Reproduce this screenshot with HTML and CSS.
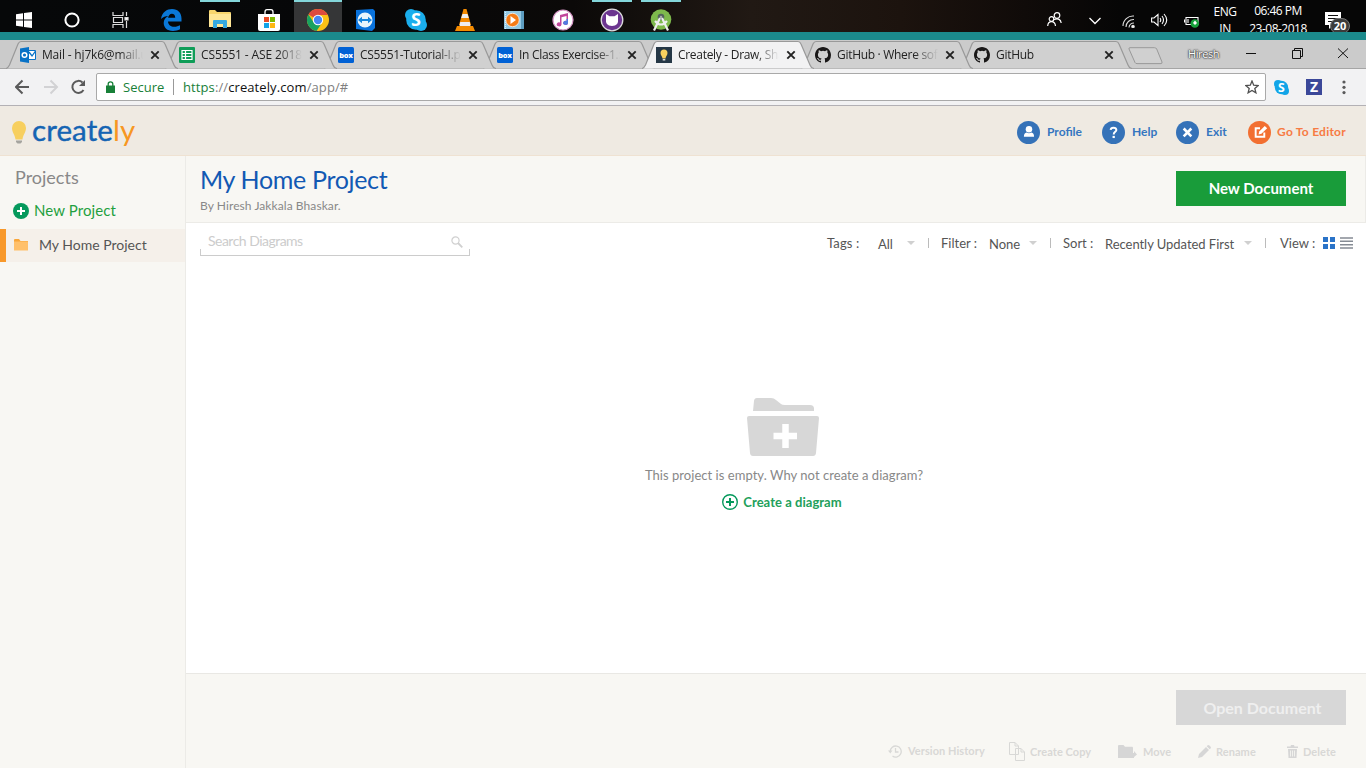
FILE: index.html
```html
<!DOCTYPE html>
<html lang="en">
<head>
<meta charset="utf-8">
<title>Creately - Draw, Share</title>
<link rel="stylesheet" href="styles.css">
</head>
<body>
<svg class="defs" width="0" height="0">
  <symbol id="tab" viewBox="0 0 172 29"><path d="M0 28.5C2 28 2.500 27 3.500 25L12 4Q13.200 1.500 15 1.500H156Q158 1.500 159 4L168 25Q169 28 172 28.500" stroke="#999" stroke-width="1.200"/></symbol>
  <symbol id="x" viewBox="0 0 10 10"><path d="M1.300 1.300L8.700 8.700M8.700 1.300L1.300 8.700" stroke="#222" stroke-width="1.900"/></symbol>
  <symbol id="github" viewBox="0 0 16 16"><path fill="#191717" d="M8 0C3.580 0 0 3.580 0 8c0 3.540 2.290 6.530 5.470 7.590.4.070.55-.17.55-.38 0-.19-.01-.82-.01-1.490-2.010.37-2.530-.49-2.690-.94-.09-.23-.48-.94-.82-1.130-.28-.15-.68-.52-.01-.53.63-.01 1.080.58 1.230.82.72 1.210 1.870.87 2.330.66.07-.52.28-.87.51-1.070-1.780-.2-3.640-.89-3.640-3.950 0-.87.31-1.590.82-2.150-.08-.2-.36-1.020.08-2.120 0 0 .67-.21 2.200.82a7.600 7.600 0 0 1 4 0c1.530-1.040 2.200-.82 2.200-.82.44 1.100.16 1.920.08 2.120.51.56.82 1.270.82 2.150 0 3.070-1.870 3.750-3.650 3.950.29.25.54.73.54 1.480 0 1.070-.01 1.930-.01 2.200 0 .21.15.46.55.38A8 8 0 0 0 16 8c0-4.420-3.580-8-8-8z"/></symbol>
</svg>

<div class="taskbar">
  <div class="apps">
    <div class="tile"><svg width="16" height="16" viewBox="0 0 16 16" fill="#fff"><path d="M0 2.300L7 1.300V7.500H0zM8 1.100L16 0V7.500H8zM0 8.500H7V14.700L0 13.700zM8 8.500H16V16L8 14.900z"/></svg></div>
    <div class="tile"><svg width="16" height="16" viewBox="0 0 16 16"><circle cx="8" cy="8" r="6.600" fill="none" stroke="#fff" stroke-width="2"/></svg></div>
    <div class="tile view"><svg width="17" height="16" viewBox="0 0 17 16" fill="none" stroke="#ddd" stroke-width="1.200"><path d="M1 0V3.500H11V0M1 16V12.500H11V16M1.500 5.500H10.500V10.500H1.500zM14.500 0V4M14.500 9V16"/><path d="M13 5.500H16V8H13z" fill="#fff"/></svg></div>
    <div class="tile"><svg width="21" height="22" viewBox="0 0 21 22"><path fill="#0a78d7" d="M0 10C1 3 6 0 11 0C17 0 20.500 4 20.500 9.500V12.500H7C7.200 16 10 17.800 13 17.800C15.500 17.800 17.500 17.200 19 16.300V20.300C17 21.500 14.500 22 12 22C6 22 2.700 18.400 2.700 14C2.700 10.800 4.500 8.500 7.300 7C4.500 7.200 2 8 0 10zM7.100 8.800H14.200C14.200 6.200 13 4.800 10.900 4.800C8.900 4.800 7.500 6.500 7.100 8.800z"/></svg></div>
    <div class="tile open"><svg width="22" height="20" viewBox="0 0 22 20"><path fill="#f8d66d" d="M0 1Q0 0 1 0H6L8 2H21Q22 2 22 3V17H0z"/><path fill="#ffe796" d="M0 4H22V17H0z"/><path fill="#35a9df" d="M4 18V11Q4 10 5 10H17Q18 10 18 11V18H14V14H8V18z"/></svg></div>
    <div class="tile"><svg width="24" height="22" viewBox="0 0 24 22"><path d="M8 5V3Q8 .7 10 .7H14Q16 .7 16 3V5" fill="none" stroke="#fff" stroke-width="1.300"/><path fill="#fff" d="M1 5H23V20Q23 22 21 22H3Q1 22 1 20z"/><path fill="#e94b26" d="M7 8h5v5H7z"/><path fill="#7eb900" d="M13 8h5v5h-5z"/><path fill="#13a3e8" d="M7 14h5v5H7z"/><path fill="#fdb813" d="M13 14h5v5h-5z"/></svg></div>
    <div class="tile open active"><svg width="22" height="22" viewBox="0 0 22 22"><circle cx="11" cy="11" r="11" fill="#fbc116"/><path fill="#dd4b3e" d="M11 11L1.400 5.600A11 11 0 0 1 20.800 6H11z"/><path fill="#18a260" d="M1.400 5.600A11 11 0 0 0 9.500 21.900L14.500 14.500L6.500 13z"/><circle cx="11" cy="11" r="5.200" fill="#fff"/><circle cx="11" cy="11" r="4.200" fill="#4587f3"/></svg></div>
    <div class="tile tv"><svg width="20" height="22" viewBox="0 0 20 22"><path fill="#0972dc" d="M1 1L18 0L20 2V19L17 22L1 20z"/><circle cx="10" cy="11" r="7.500" fill="#e8f4fc"/><path fill="#1685dd" d="M3 11L7 7.800V10H13V7.800L17 11L13 14.200V12H7V14.200z"/></svg></div>
    <div class="tile"><svg width="22" height="22" viewBox="0 0 22 22"><circle cx="11" cy="11" r="9.800" fill="#1aaeed"/><circle cx="6" cy="6" r="6" fill="#1aaeed"/><circle cx="16" cy="16" r="6" fill="#1aaeed"/><text x="11" y="17" text-anchor="middle" class="skype">S</text></svg></div>
    <div class="tile"><svg width="20" height="22" viewBox="0 0 20 22"><path fill="#f48b00" d="M8.500 0H11.500L16 16H4zM2 17H18L20 22H0z"/><path fill="#eee" d="M7.500 5H12.500L13.800 9H6.200zM5.200 13H14.800L15.500 17H4.500z"/></svg></div>
    <div class="tile"><svg width="20" height="20" viewBox="0 0 20 20"><path fill="#5d9dc0" d="M5 1H20V19H5z"/><path fill="#94c9e3" d="M0 1H17V19H0z"/><path d="M1.500 2V19" stroke="#def" stroke-dasharray="1 1"/><circle cx="8.500" cy="10" r="6.700" fill="#f47b16" stroke="#fff" stroke-width=".7"/><path fill="#fff" d="M6.500 6L12 10L6.500 14z"/></svg></div>
    <div class="tile"><svg width="22" height="22" viewBox="0 0 22 22"><circle cx="11" cy="11" r="10" fill="#fff" stroke="#d796c7" stroke-width="1.200"/><path fill="#c2459c" d="M8 6L16 4V14A2.400 2 0 1 1 14.500 12V7L9.500 8.300V15.500A2.400 2 0 1 1 8 13.500z"/><path fill="#517ce0" d="M14.500 10H16V14A2.400 2 0 1 1 14.500 12z"/></svg></div>
    <div class="tile open"><svg width="24" height="24" viewBox="0 0 24 24"><circle cx="12" cy="12" r="10.800" fill="#6c3590" stroke="#ddd" stroke-width="1.300"/><path fill="#fff" d="M6 6L9.500 8.200H14.500L18 6V11Q19 18 12 18Q5 18 6 11z"/></svg></div>
    <div class="tile open"><svg width="22" height="22" viewBox="0 0 22 22"><circle cx="11" cy="10.500" r="10.300" fill="#7eb94c"/><circle cx="11" cy="8" r="3.300" fill="#52635b"/><circle cx="11" cy="8" r="1.200" fill="#aaa"/><path d="M10 9L4 21.500M12 9L18 21.500M5 12Q11 19 17 12" fill="none" stroke="#eee" stroke-width="2.200"/></svg></div>
  </div>
  <div class="tray">
    <svg class="people" width="15" height="15" viewBox="0 0 15 15" fill="none" stroke="#fff" stroke-width="1.200"><circle cx="10" cy="3.500" r="2.800"/><circle cx="4.500" cy="7" r="2.300"/><path d="M.7 14Q1 9.700 4.500 9.700T8.500 14M7 7.500Q13.500 5.500 14.200 11"/></svg>
    <svg class="chev" width="12" height="8" viewBox="0 0 12 8"><path d="M.5 1L6 6.500L11.500 1" fill="none" stroke="#fff" stroke-width="1.300"/></svg>
    <svg class="wifi" width="14" height="13" viewBox="0 0 14 13" fill="none" stroke="#ddd" stroke-width="1.100"><path d="M1 11A10 10 0 0 1 12 1M4 12A7.500 7.500 0 0 1 12 4.500M7 12.500A5 5 0 0 1 12 8"/><circle cx="11" cy="11.500" r="1.200" fill="#fff"/></svg>
    <svg class="vol" width="17" height="14" viewBox="0 0 17 14" fill="none" stroke="#fff" stroke-width="1.100"><path d="M.6 5H3L7 1.500V12.500L3 9H.6zM9 5Q10.500 7 9 9M11 3Q14 7 11 11M13 1Q18.500 7 13 13"/></svg>
    <svg class="bat" width="16" height="12" viewBox="0 0 16 12"><path d="M2 1.500H14V8.500H2zM.5 3.500V6.500M4 3V7" fill="none" stroke="#fff" stroke-width="1.100"/><circle cx="10.800" cy="7.500" r="4.300" fill="#16a13a"/><path d="M11 4.500L13 7L11 9L9 7zM11 8V11" fill="#fff"/></svg>
    <div class="lang">ENG<br>IN</div>
    <div class="clock"><span>06:46 PM</span><br>23-08-2018</div>
    <div class="notes"><svg width="16" height="17" viewBox="0 0 16 17"><path fill="#fff" d="M0 0H16V13H8L4 17V13H0z"/><path d="M3 3.500H13M3 6.500H13M3 9.500H9" stroke="#111"/></svg><b class="count">20</b></div>
  </div>
</div>
<div class="strip"></div>

<div class="tabs">
  <div class="tab"><svg class="shape"><use href="#tab"/></svg><svg class="fav" viewBox="0 0 16 16"><path fill="#0872c6" d="M0 1.500L9 0V16L0 14.500z"/><circle cx="4.500" cy="8" r="2.300" fill="none" stroke="#fff" stroke-width="1.500"/><path d="M9 3.500H15.500V12.500H9" fill="#fff" stroke="#0872c6"/><path d="M9 5L12 9L15.500 4" fill="none" stroke="#0872c6" stroke-width="1.300"/></svg><span class="name t1">Mail - hj7k6@mail.u</span><svg class="close"><use href="#x"/></svg></div>
  <div class="tab"><svg class="shape"><use href="#tab"/></svg><svg class="fav" viewBox="0 0 16 16"><rect width="16" height="16" rx="1" fill="#0f9d58"/><path d="M3 3.500H13V12.500H3zM3 6.500H13M3 9.500H13M6.500 3.500V12.500" fill="none" stroke="#fff" stroke-width="1.200"/></svg><span class="name t2">CS5551 - ASE 2018</span><svg class="close"><use href="#x"/></svg></div>
  <div class="tab"><svg class="shape"><use href="#tab"/></svg><svg class="fav" viewBox="0 0 16 16"><rect width="16" height="16" rx="1.500" fill="#0061d5"/><text x="8" y="11" text-anchor="middle" class="box">box</text></svg><span class="name t3">CS5551-Tutorial-I.p</span><svg class="close"><use href="#x"/></svg></div>
  <div class="tab"><svg class="shape"><use href="#tab"/></svg><svg class="fav" viewBox="0 0 16 16"><rect width="16" height="16" rx="1.500" fill="#0061d5"/><text x="8" y="11" text-anchor="middle" class="box">box</text></svg><span class="name t4">In Class Exercise-1.:</span><svg class="close"><use href="#x"/></svg></div>
  <div class="tab current"><svg class="shape"><use href="#tab"/></svg><svg class="fav" viewBox="0 0 16 16"><path fill="#253746" d="M0 0H16V16H0z"/><path fill="#f7cf5e" d="M8 2.500A3.600 3.600 0 0 1 11.500 6C11.500 8 9.800 9.300 9.500 11.500H6.500C6.200 9.300 4.500 8 4.500 6A3.600 3.600 0 0 1 8 2.500z"/><path fill="#ddd" d="M6.700 12H9.300V13.500H6.700z"/></svg><span class="name t5">Creately - Draw, Sha</span><svg class="close"><use href="#x"/></svg></div>
  <div class="tab"><svg class="shape"><use href="#tab"/></svg><svg class="fav"><use href="#github"/></svg><span class="name t6">GitHub · Where soft</span><svg class="close"><use href="#x"/></svg></div>
  <div class="tab"><svg class="shape"><use href="#tab"/></svg><svg class="fav"><use href="#github"/></svg><span class="name t7">GitHub</span><svg class="close"><use href="#x"/></svg></div>
  <svg class="newtab" width="35" height="18" viewBox="0 0 35 18"><path d="M2 .7H26.500Q28 .7 28.700 2L34 15Q34.300 16.600 33 16.600H9Q7.500 16.600 7 15.500L1 2Q.6 .7 2 .7z" fill="#d0d0d0" stroke="#999"/></svg>
  <span class="user">Hiresh</span>
  <svg class="winbtns" width="102" height="12" viewBox="0 0 102 12" fill="none" stroke="#111"><path d="M0 6.500H10M46.500 3.500H54.500V11.500H46.500zM48.500 3V1.500H56.500V9.500H55M92 1.500L102 11M102 1.500L92 11"/></svg>
</div>

<div class="toolbar">
  <svg width="72" height="16" viewBox="0 0 72 16" fill="none" stroke-width="2"><path stroke="#5a5a5a" d="M14 8H1.500M7.500 1.500L1 8L7.500 14.500"/><path stroke="#d2d2d4" d="M29 8H41.500M35.500 1.500L42 8L35.500 14.500"/><path stroke="#5a5a5a" d="M68.500 11A6 6 0 1 1 67.500 3.500"/><path fill="#5a5a5a" d="M70 1V7H64z"/></svg>
  <div class="url">
    <svg width="9" height="12" viewBox="0 0 9 12"><path fill="#188038" d="M0 4.500H9V12H0z"/><path d="M2.200 5V3Q2.200.8 4.500.8T6.800 3V5" fill="none" stroke="#188038" stroke-width="1.300"/></svg>
    <span class="secure">Secure</span><i></i>
    <span class="addr"><b>https</b>://<em>creately.com</em>/app/#</span>
    <svg class="star" width="14" height="14" viewBox="0 0 14 14"><path d="M7 1L8.700 5.200L13.200 5.500L9.800 8.400L10.900 12.800L7 10.400L3.100 12.800L4.200 8.400L.8 5.500L5.300 5.200z" fill="none" stroke="#505050" stroke-width="1.300"/></svg>
  </div>
  <svg class="sk" width="15" height="15" viewBox="0 0 22 22"><circle cx="11" cy="11" r="9.800" fill="#12a5e8"/><circle cx="6" cy="6" r="6" fill="#12a5e8"/><circle cx="16" cy="16" r="6" fill="#12a5e8"/><text x="11" y="17.500" text-anchor="middle" class="skype">S</text></svg>
  <b class="zed">Z</b>
  <svg class="dots" width="4" height="15" viewBox="0 0 4 15" fill="#5a5a5a"><circle cx="2" cy="2" r="1.600"/><circle cx="2" cy="7.300" r="1.600"/><circle cx="2" cy="12.600" r="1.600"/></svg>
</div>

<header class="appbar">
  <svg class="bulb" width="14" height="23" viewBox="0 0 14 23"><path fill="#f7cf5e" d="M7 0A7 7 0 0 1 14 7C14 11.500 10.800 14 10.500 18.500H3.500C3.200 14 0 11.500 0 7A7 7 0 0 1 7 0z"/><path fill="#a5a49f" d="M4 19.500H10V21L8.500 22.500H5.500L4 21z"/></svg>
  <div class="logo">create<span>ly</span></div>
  <nav>
    <a class="profile"><svg viewBox="0 0 24 24"><circle cx="12" cy="12" r="12" fill="#3572b8"/><circle cx="12.500" cy="8.500" r="3.400" fill="#fff"/><path fill="#fff" d="M7.200 16.500Q7.200 12.500 10 12Q12.500 13.500 15 12Q17.800 12.500 17.800 16.500z"/></svg><span>Profile</span></a>
    <a class="help"><svg viewBox="0 0 24 24"><circle cx="12" cy="12" r="12" fill="#3572b8"/><path d="M9 9.200Q9.200 7 12 7T15 9.300C15 11.300 12.200 11.200 12.200 14" fill="none" stroke="#fff" stroke-width="2"/><path fill="#fff" d="M11 15.500H13.400V17.800H11z"/></svg><span>Help</span></a>
    <a class="exit"><svg viewBox="0 0 24 24"><circle cx="12" cy="12" r="12" fill="#3572b8"/><path d="M8 7.800L16 16M16 7.800L8 16" stroke="#fff" stroke-width="2.700"/></svg><span>Exit</span></a>
    <a class="editor"><svg viewBox="0 0 24 24"><circle cx="12" cy="12" r="12" fill="#f26f31"/><path d="M12.500 7.500H8V16.500H17V12" fill="none" stroke="#fff" stroke-width="2"/><path fill="#fff" d="M11 14L11.700 11L17.500 5.300L20 7.600L14 13.400z"/></svg><span>Go To Editor</span></a>
  </nav>
</header>

<div class="app">
  <aside>
    <h2>Projects</h2>
    <div class="newproj"><svg width="16" height="16" viewBox="0 0 16 16"><circle cx="8" cy="8" r="8" fill="#05995c"/><path d="M8 4V12M4 8H12" stroke="#fff" stroke-width="2"/></svg><span>New Project</span></div>
    <div class="proj"><svg width="14" height="12" viewBox="0 0 14 12"><path fill="#f9a63a" d="M0 1Q0 0 1 0H5L6.500 2H14V5H0z"/><path fill="#ffc06b" d="M0 2.500H14V11.500H0z"/></svg><span>My Home Project</span></div>
  </aside>
  <main>
    <section class="head"><div><h1>My Home Project</h1><p>By Hiresh Jakkala Bhaskar.</p></div><button class="newdoc"><span>New Document</span></button></section>
    <section class="content">
      <div class="search"><span>Search Diagrams</span><svg width="12" height="12" viewBox="0 0 12 12" fill="none" stroke="#d0d0d0"><circle cx="4.500" cy="4.500" r="3.600" stroke-width="1.200"/><path d="M7 7L11.300 11.300" stroke-width="1.800"/></svg></div>
      <div class="filters">
        <span class="f1">Tags :</span><span class="v f2">All</span><i class="arr"></i><i class="sep"></i>
        <span class="f3">Filter :</span><span class="v f4">None</span><i class="arr"></i><i class="sep"></i>
        <span class="f5">Sort :</span><span class="v f6">Recently Updated First</span><i class="arr"></i><i class="sep"></i>
        <span class="f7">View :</span>
        <svg width="12" height="12" viewBox="0 0 12 12" fill="#2a73c8"><path d="M0 0H5V5H0zM7 0H12V5H7zM0 7H5V12H0zM7 7H12V12H7z"/></svg>
        <svg width="13" height="12" viewBox="0 0 13 12"><path d="M0 1H13M0 4.300H13M0 7.700H13M0 11H13" stroke="#858b94" stroke-width="1.600"/></svg>
      </div>
      <div class="empty">
        <svg width="72" height="58" viewBox="0 0 72 58" fill="#d7d7d7"><path d="M6 13L7 3Q7.300 0 10 0H24Q27 0 29 2L34 6Q35 7 38 7H63Q66.500 7 67 10V13zM2 18H70Q72 18 72 20L69 55Q68.700 58 66 58H6Q3.300 58 3 55L0 20Q0 18 2 18z"/><path d="M38.500 26V50M26.500 38H50" stroke="#fff" stroke-width="6.500"/></svg>
        <p>This project is empty. Why not create a diagram?</p>
        <div class="create"><svg width="16" height="16" viewBox="0 0 16 16" fill="none" stroke="#05995c"><circle cx="8" cy="8" r="7.300" stroke-width="1.400"/><path d="M8 4V12M4 8H12" stroke-width="2"/></svg><b>Create a diagram</b></div>
      </div>
    </section>
    <footer>
      <button class="opendoc"><span>Open Document</span></button>
      <div class="actions">
        <div class="a1"><svg width="14" height="13" viewBox="0 0 14 13" fill="none" stroke="#d8d8d6" stroke-width="1.300"><path d="M2.200 6.500A5.500 5.500 0 1 1 4.500 11M7.500 3V7H10.500"/><path fill="#d8d8d6" stroke="none" d="M0 5.500H4.500L2.300 8.500z"/></svg><span>Version History</span></div>
        <div class="a2"><svg width="16" height="19" viewBox="0 0 16 19" fill="#f8f7f3" stroke="#d8d8d6"><path d="M.5.500H6L9.500 4V12.500H.5zM6 .5V4H9.500M6.500 6.500H12L15.500 10V18.500H6.500zM12 6.500V10H15.500"/></svg><span>Create Copy</span></div>
        <div class="a3"><svg width="19" height="13" viewBox="0 0 19 13" fill="#d6d6d6"><path d="M0 1Q0 0 1 0H5.500L7 1.700H14Q15 1.700 15 3V8H16V6L19 9.500L16 12V13H0z"/></svg><span>Move</span></div>
        <div class="a4"><svg width="13" height="13" viewBox="0 0 13 13" fill="#d6d6d6"><path d="M0 13L1 9L8 2L11 5L4 12zM8.700 1.300L10 0Q11 0 12 1T13 3L11.700 4.300z"/></svg><span>Rename</span></div>
        <div class="a5"><svg width="11" height="13" viewBox="0 0 11 13"><path fill="#d6d6d6" d="M0 1.500H3.500L4 0H7L7.500 1.500H11V3H0zM1 4H10L9.500 13H1.500z"/><path d="M3.500 5.500V11.500M5.500 5.500V11.500M7.500 5.500V11.500" stroke="#f8f7f3" stroke-width=".8"/></svg><span>Delete</span></div>
      </div>
    </footer>
  </main>
</div>
</body>
</html>
```
FILE: styles.css
```css
* { box-sizing: border-box; }
html, body { height: 768px; overflow: hidden; }
body { margin: 0; font-family: Lato, sans-serif; background: #fff; color: #555; white-space: nowrap; }
h1, h2, p { margin: 0; font-weight: 400; }
svg { display: block; flex: none; }
span, b { flex: none; }
.defs { position: absolute; }

.taskbar { height: 32px; display: flex; justify-content: space-between; overflow: hidden; color: #fff; background: linear-gradient(90deg, #060809 0, #060708 25%, #0b0908 42%, #211914 55%, #1c130e 66%, #100b09 75%, #060606 82%, #060606 100%); }
.apps { display: flex; gap: 1px; }
.tile { width: 48px; height: 32px; display: flex; justify-content: center; align-items: center; padding-top: 7px; }
.tile:nth-child(-n+3) { margin-right: -1px; }
.tile:nth-child(3) { margin-right: 2px; }
.tile.tv { padding-right: 4px; }
.tile.open { background: linear-gradient(#83d6da, #83d6da) center top / 40px 2px no-repeat; }
.tile.active { background: linear-gradient(#83d6da, #83d6da) center top / 48px 2px no-repeat, #353637; }
.skype { font: 700 18px "Open Sans", sans-serif; fill: #fff; }
.tray { display: flex; width: 319px; font: 12px/17px "Open Sans", sans-serif; letter-spacing: -.5px; text-align: center; }
.people { margin-top: 12px; }
.chev { margin: 17px 0 0 27px; }
.wifi { margin: 15px 0 0 21px; }
.vol { margin: 13px 0 0 15px; }
.bat { margin: 16px 0 0 16px; }
.lang { width: 24px; margin: 3px 0 0 13px; }
.clock { width: 60px; margin: 2px 0 0 11px; line-height: 18px; }
.notes { position: relative; margin: 12px 0 0 17px; }
.count { position: absolute; left: 5px; top: 6px; width: 20px; height: 16px; border-radius: 8px; background: #3b3b3b; border: 1px solid #777; font-size: 11px; line-height: 14px; letter-spacing: 0; }
.strip { height: 8px; background: #1b8a8c; }

.tabs { height: 29px; display: flex; padding-left: 6px; background: #cbcbcb; border-bottom: 1px solid #a5a5a5; font: 12px/16px "Open Sans", sans-serif; }
.tab { position: relative; width: 159px; height: 29px; display: flex; align-items: flex-start; padding: 7px 0 0 14px; color: #222; z-index: 1; }
.tab:nth-child(1) { z-index: 7; } .tab:nth-child(2) { z-index: 6; } .tab:nth-child(3) { z-index: 5; } .tab:nth-child(4) { z-index: 4; }
.tab:nth-child(6) { z-index: 3; } .tab:nth-child(7) { z-index: 2; }
.tab.current { z-index: 9; }
.shape { position: absolute; left: 0; top: 0; width: 172px; height: 29px; fill: #d0d0d0; }
.current .shape { fill: #f2f2f3; }
.fav { position: relative; width: 16px; height: 16px; }
.box { font: 800 7.500px "Open Sans", sans-serif; fill: #fff; letter-spacing: -.3px; }
.name { position: relative; width: 101px; margin-left: 6px; overflow: hidden; -webkit-mask-image: linear-gradient(90deg, #000 76%, transparent); mask-image: linear-gradient(90deg, #000 76%, transparent); letter-spacing: -.3px; }
.t1 { letter-spacing: -.18px; } .t2 { letter-spacing: -.12px; }
.close { position: relative; width: 10px; height: 10px; margin: 3px 0 0 7px; }
.newtab { margin: 7px 0 0 9px; }
.user { margin: 6px 0 0 25px; width: 32px; color: #fff; font-size: 11px; letter-spacing: -.4px; text-shadow: 0 0 2px #333, 0 0 2px #333, 0 0 1px #333; }
.winbtns { margin: 7px 0 0 26px; }

.toolbar { height: 37px; display: flex; align-items: center; padding-left: 15px; background: #f2f2f3; border-bottom: 1px solid #b3b1b5; }
.url { display: flex; align-items: center; width: 1170px; height: 28px; margin-left: 9px; padding-left: 9px; background: #fff; border: 1px solid #a9a9a9; border-radius: 2px; }
.url { font: 14px/20px "Open Sans", sans-serif; }
.secure { width: 41px; margin-left: 8px; color: #188038; font-size: 13px; }
.url i { width: 1px; height: 16px; margin-left: 9px; background: #999; }
.addr { flex: 1; margin-left: 9px; color: #808080; font-size: 13px; letter-spacing: .1px; }
.addr b { font-weight: 400; color: #188038; }
.addr em { font-style: normal; color: #111; }
.star { margin-right: 6px; }
.sk { margin-left: 8px; }
.zed { width: 16px; height: 16px; margin-left: 17px; background: #3b4899; color: #fff; font: 700 14px/16px "Open Sans", sans-serif; text-align: center; }
.dots { margin-left: 20px; }

.appbar { height: 50px; display: flex; padding-left: 12px; background: #efeae2; border-bottom: 1px solid #efe2d2; }
.bulb { margin-top: 15px; }
.logo { width: 106px; margin: 6px 0 0 6px; font-size: 29.500px; line-height: 36px; color: #1564b3; letter-spacing: .1px; -webkit-text-stroke: .4px #1564b3; }
.logo span { color: #f79722; -webkit-text-stroke: 0; }
nav { display: flex; margin: 14px 0 0 879px; height: 24px; font-size: 12px; font-weight: 700; color: #3576c0; }
nav a { display: flex; align-items: center; }
nav span { margin-top: -2px; }
nav svg { width: 23px; height: 23px; margin-right: 7px; }
.profile { width: 85px; } .help { width: 74px; } .exit { width: 72px; }
.editor { color: #f77b43; letter-spacing: .25px; }
.editor svg { margin-right: 6px; }

.app { display: flex; height: 612px; }
aside { width: 186px; background: #f8f7f3; border-right: 1px solid #ecebe7; }
aside h2 { margin: 10px 0 0 15px; font-size: 18px; line-height: 22px; color: #888; }
.newproj { display: flex; align-items: center; gap: 5px; height: 20px; margin: 13px 0 0 13px; font-size: 15px; letter-spacing: .1px; color: #1f9f40; }
.newproj span { margin-top: -2px; }
.proj { display: flex; align-items: center; height: 33px; margin-top: 8px; padding-left: 8px; border-left: 6px solid #f8982a; background: #f5f0ea; font-size: 14px; color: #555; }
.proj svg { margin-top: -2px; }
.proj span { margin: -2px 0 0 11px; }
main { display: flex; flex-direction: column; width: 1180px; }
.head { display: flex; justify-content: space-between; height: 67px; padding: 15px 19px 0 14px; background: #f8f7f3; border-bottom: 1px solid #ecebe7; border-right: 1px solid #ecebe7; }
h1 { height: 26px; margin-top: -6px; font-size: 25px; line-height: 28px; letter-spacing: -.33px; color: #1259b3; }
.head p { margin-top: 6px; font-size: 12px; line-height: 17px; letter-spacing: .08px; color: #888; }
button { display: block; width: 170px; height: 35px; padding: 0; border: 0; border-radius: 0; font: 700 15px/35px Lato, sans-serif; }
.newdoc { background: #199c3a; color: #fff; }
.content { display: grid; grid-template-columns: 270px 1fr; grid-template-rows: 33px 1fr; height: 450px; padding-left: 14px; background: #fff; }
.search { display: flex; justify-content: space-between; padding: 9px 7px 0 8px; font-size: 14px; line-height: 18px; letter-spacing: -.52px; color: #ccc; background: linear-gradient(#ccc, #ccc) left bottom / 1px 7px no-repeat, linear-gradient(#ccc, #ccc) right bottom / 1px 7px no-repeat, linear-gradient(#ccc, #ccc) left bottom / 100% 1px no-repeat; }
.search svg { margin-top: 4px; }
.filters { display: grid; grid-template-columns: 52px 29px 21px 13px 48px 40px 21px 13px 42px 139px 21px 15px 43px 17px 13px; align-items: center; height: 20px; margin: 10px 0 0 356px; font-size: 13px; line-height: 18px; color: #555; }
.f1 { margin-left: 1px; letter-spacing: .15px; }
.f6 { letter-spacing: -.04px; }
.v { padding-top: 2px; }
.arr { width: 8px; border: 4px solid transparent; border-top-color: #d0d0d0; border-bottom: 0; }
.sep { width: 1px; height: 10px; background: #bbb; }
.empty { grid-column: 1 / 3; display: flex; flex-direction: column; align-items: center; width: 1168px; padding-top: 142px; }
.empty svg { margin-right: 2px; }
.empty p { margin-top: 10px; font-size: 13px; line-height: 18px; letter-spacing: .04px; color: #888; }
.create { display: flex; align-items: center; gap: 3px; margin: 9px 4px 0 0; font-size: 13px; line-height: 18px; letter-spacing: .04px; color: #22a05b; }
footer { height: 95px; border-top: 1px solid #e9e8e4; background: #f8f7f3; }
.opendoc { margin: 16px 0 0 990px; background: #d7d7d7; color: #efefef; font-size: 16px; padding-left: 3px; }
.actions { display: flex; margin: 16px 0 0 702px; height: 20px; font-size: 11px; font-weight: 700; letter-spacing: .06px; color: #d8d8d6; }
.actions div { display: flex; align-items: center; gap: 5px; }
.a1 span { margin: -1px 0 0 1px; }
.a1 { width: 121px; } .a2 { width: 109px; } .a3 { width: 80px; } .a4 { width: 89px; }
.a3 span { margin-left: 1px; }
```
